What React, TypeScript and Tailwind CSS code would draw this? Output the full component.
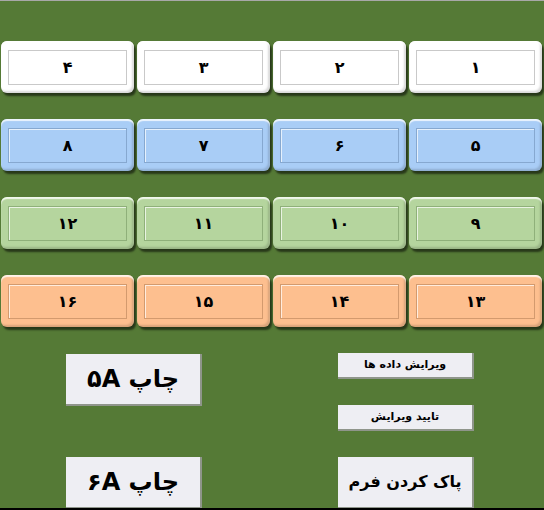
const rows = [
  { bg: 'bg-[#ffffff]', line: 'border-[#c9c9c9]', items: ['۱', '۲', '۳', '۴'] },
  { bg: 'bg-[#a9cdf6]', line: 'border-[#86a8d0]', items: ['۵', '۶', '۷', '۸'] },
  { bg: 'bg-[#b5d59e]', line: 'border-[#8fb07a]', items: ['۹', '۱۰', '۱۱', '۱۲'] },
  { bg: 'bg-[#fdbf8f]', line: 'border-[#d39a6e]', items: ['۱۳', '۱۴', '۱۵', '۱۶'] },
];

function Tile({ label, bg, line }: { label: string; bg: string; line: string }) {
  return (
    <div
      className={`h-[52px] w-[133px] rounded-[6px] ${bg} px-[7px] pt-[9px] pb-[8px] shadow-[inset_0_2px_1px_rgba(255,255,255,0.8),inset_-2px_-2px_2px_rgba(0,0,0,0.15),2px_3px_2px_rgba(0,0,0,0.55)]`}
    >
      <div
        className={`flex h-full items-center justify-center border ${line} shadow-[inset_1px_1px_0_rgba(255,255,255,0.7)] text-[16px] font-bold tracking-[3px] text-black`}
      >
        {label}
      </div>
    </div>
  );
}

function Btn({ label, size, h }: { label: string; size: string; h: string }) {
  return (
    <div
      className={`flex w-[136px] ${h} items-center justify-center bg-[#eeeef3] border-r-2 border-b-2 border-[#8f958b] font-bold text-black ${size}`}
    >
      {label}
    </div>
  );
}

export default function App() {
  return (
    <div
      dir="rtl"
      className="w-[544px] h-[510px] bg-[#557a36] flex flex-col overflow-hidden"
      style={{ fontFamily: '"DejaVu Sans", sans-serif' }}
    >
      <div className="h-[1px] bg-[#a8a8a8]" />
      <div className="flex-1 overflow-hidden">
        {/* number tiles */}
        <div className="flex flex-col gap-[26px] pt-[40px] pr-[2px]">
          {rows.map((row, i) => (
            <div key={i} className="flex gap-[3px]">
              {row.items.map((n) => (
                <Tile key={n} label={n} bg={row.bg} line={row.line} />
              ))}
            </div>
          ))}
        </div>

        {/* buttons */}
        <div className="flex pt-[26px] pr-[70px] gap-[136px]">
          <div className="flex flex-col gap-[26px]">
            <Btn label="ویرایش داده ها" size="text-[11px]" h="h-[26px]" />
            <Btn label="تایید ویرایش" size="text-[11px]" h="h-[26px]" />
            <Btn label="پاک کردن فرم" size="text-[16px]" h="h-[52px]" />
          </div>
          <div className="flex flex-col gap-[51px] pt-[1px]">
            <Btn label="چاپ ۵A" size="text-[24px]" h="h-[52px]" />
            <Btn label="چاپ ۶A" size="text-[24px]" h="h-[52px]" />
          </div>
        </div>
      </div>
      <div className="h-[2px] bg-black" />
    </div>
  );
}
